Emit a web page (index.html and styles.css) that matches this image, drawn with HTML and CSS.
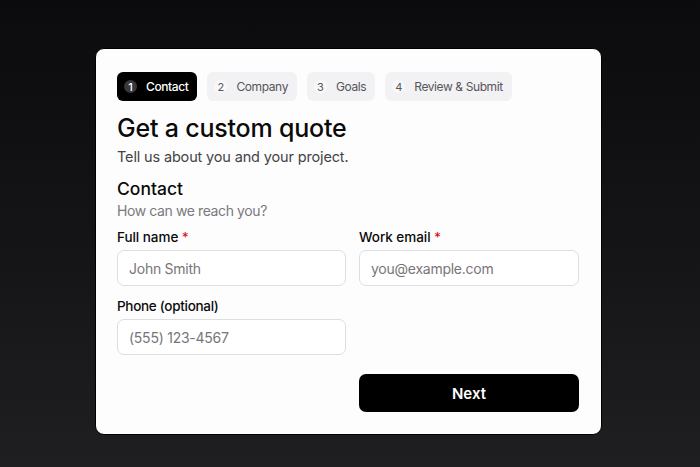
FILE: index.html
```html
<!DOCTYPE html>
<html lang="en">
<head>
<meta charset="utf-8">
<title>Get a custom quote</title>
<link rel="stylesheet" href="styles.css">
</head>
<body>
<main class="card">
  <ol class="steps">
    <li class="step active"><span class="num">1</span><span class="label">Contact</span></li>
    <li class="step"><span class="num">2</span><span class="label">Company</span></li>
    <li class="step"><span class="num">3</span><span class="label">Goals</span></li>
    <li class="step"><span class="num">4</span><span class="label">Review &amp; Submit</span></li>
  </ol>
  <h1 class="title">Get a custom quote</h1>
  <p class="subtitle">Tell us about you and your project.</p>
  <h2 class="section">Contact</h2>
  <p class="section-sub">How can we reach you?</p>
  <form class="fields">
    <div class="field">
      <label class="field-label" for="name">Full name <span class="req">*</span></label>
      <input class="input" id="name" type="text" placeholder="John Smith">
    </div>
    <div class="field">
      <label class="field-label" for="email">Work email <span class="req">*</span></label>
      <input class="input" id="email" type="email" placeholder="you@example.com">
    </div>
    <div class="field">
      <label class="field-label narrow" for="phone">Phone (optional)</label>
      <input class="input" id="phone" type="tel" placeholder="(555) 123-4567">
    </div>
    <button class="next" type="button">Next</button>
  </form>
</main>
</body>
</html>
```
FILE: styles.css
```css
* { box-sizing: border-box; }
html, body { height: 100%; }
body {
  margin: 0;
  background: linear-gradient(180deg, #0b0a0d 0%, #141316 50%, #1f1e21 100%);
  font-family: Inter, "Noto Sans", "Liberation Sans", sans-serif;
  padding: 48px 0 0 95px;
}
.card {
  width: 507px;
  background: #fdfdfd;
  border: 1px solid #000;
  border-radius: 9px;
  padding: 23px 22px 22px 21px;
}
.steps {
  list-style: none;
  margin: 0;
  padding: 0;
  display: flex;
  gap: 10px;
}
.step {
  display: flex;
  align-items: center;
  gap: 9px;
  height: 29px;
  padding: 0 9px 0 7px;
  border-radius: 6px;
  background: #f2f1f4;
  color: #56555a;
  font-size: 12px;
  letter-spacing: -0.4px;
}
.step .num {
  width: 13px;
  height: 13px;
  border-radius: 50%;
  display: flex;
  align-items: center;
  justify-content: center;
  font-size: 11px;
  letter-spacing: 0;
  background: #f8f8f9;
}
.step.active {
  background: #000;
  color: #fff;
  font-weight: 500;
}
.step.active .num {
  background: #38373b;
  color: #fff;
}
.title {
  margin: 12px 0 0;
  font-size: 25px;
  line-height: 30px;
  font-weight: 500;
  color: #0a0a0a;
  letter-spacing: -0.2px;
}
.subtitle {
  margin: 4px 0 0;
  font-size: 14.5px;
  line-height: 20px;
  color: #444347;
  letter-spacing: -0.15px;
}
.section {
  margin: 10px 0 0;
  font-size: 17.5px;
  line-height: 24px;
  font-weight: 500;
  color: #0a0a0a;
}
.section-sub {
  margin: 0;
  font-size: 14px;
  line-height: 20px;
  color: #7a797d;
  letter-spacing: -0.4px;
}
.fields {
  margin-top: 7px;
  display: grid;
  grid-template-columns: minmax(0, 229fr) minmax(0, 220fr);
  column-gap: 13px;
  row-gap: 11px;
}
.field {
  display: flex;
  flex-direction: column;
  gap: 4px;
  min-width: 0;
}
.field-label {
  font-size: 13.5px;
  line-height: 18px;
  font-weight: 500;
  color: #0a0a0a;
  letter-spacing: -0.05px;
}
.field-label.narrow { letter-spacing: -0.3px; }
.req { color: #e0101c; }
.input {
  width: 100%;
  min-width: 0;
  height: 36px;
  border: 1px solid #dedde0;
  border-radius: 7px;
  background: #fff;
  padding: 0 11px;
  font-family: inherit;
  font-size: 14px;
  letter-spacing: -0.25px;
  color: #111;
}
.input::placeholder { color: #77767a; }
.next {
  grid-column: 2;
  grid-row: 3;
  margin-top: 8px;
  height: 38px;
  border: 0;
  border-radius: 7px;
  background: #000;
  color: #fff;
  font-family: inherit;
  font-size: 15px;
  font-weight: 600;
}
```
